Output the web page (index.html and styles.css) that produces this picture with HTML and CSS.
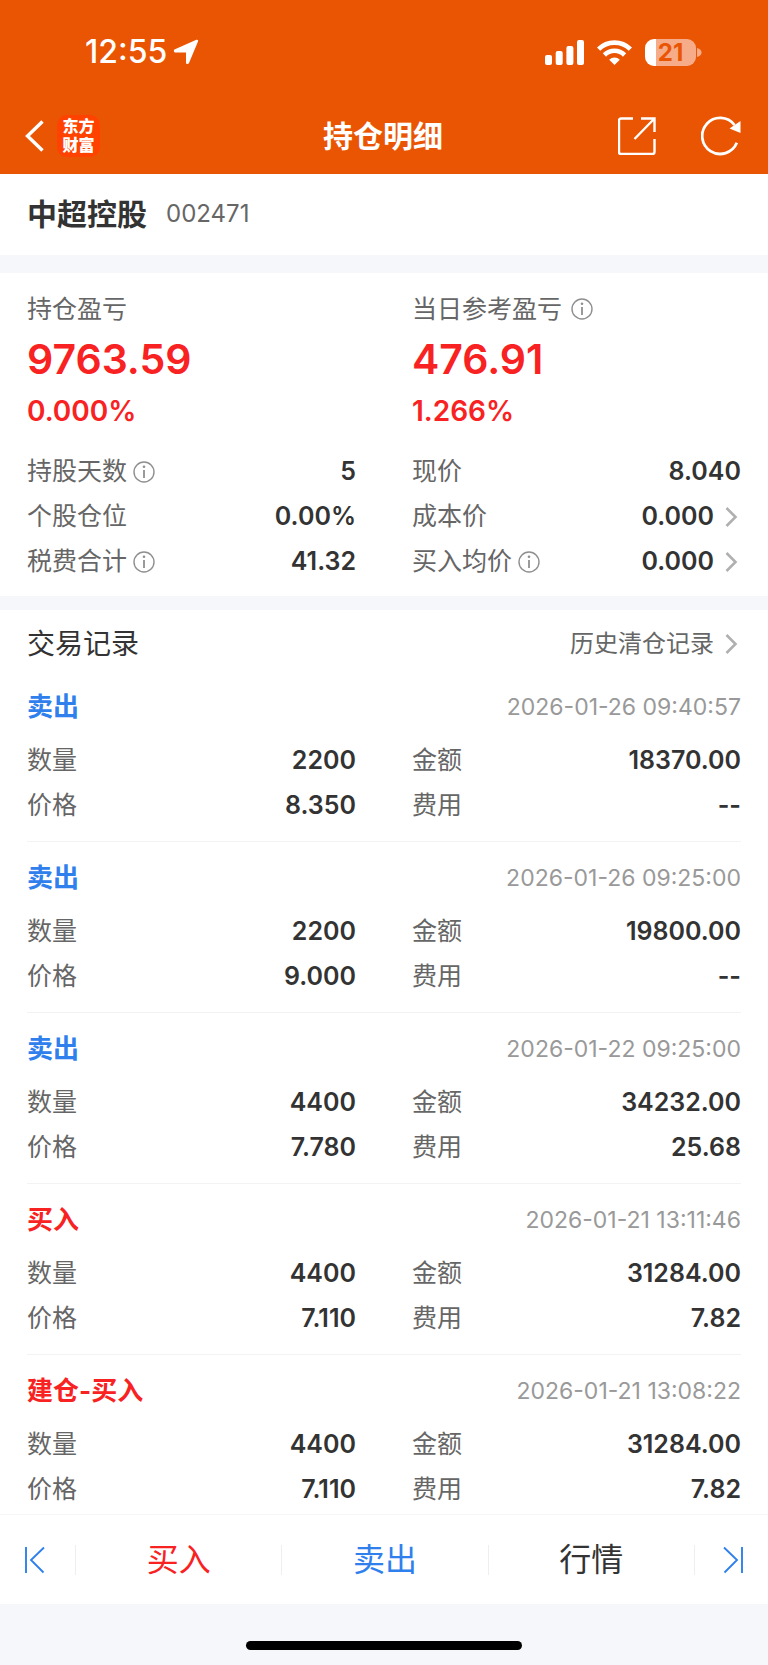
FILE: index.html
```html
<!DOCTYPE html>
<html lang="zh-CN">
<head>
<meta charset="utf-8">
<meta name="viewport" content="width=device-width, initial-scale=1">
<title>持仓明细</title>
<link rel="stylesheet" href="styles.css">
</head>
<body>
<svg class="sprite" aria-hidden="true">
  <symbol id="info" viewBox="0 0 22 22"><circle cx="11" cy="11" r="10" fill="none" stroke="currentColor" stroke-width="1.4"/><path d="M11 9v8" stroke="currentColor" stroke-width="1.8"/><circle cx="11" cy="5.8" r="1.3" fill="currentColor"/></symbol>
  <symbol id="chevron" viewBox="0 0 27 24"><path d="M12.500 3L21.500 12l-9 9" fill="none" stroke="#b0b0b0" stroke-width="2.600"/></symbol>
</svg>

<header class="top">
  <div class="status">
    <div class="status-left">
      <span class="clock">12:55</span>
      <svg width="26" height="26" viewBox="0 0 26 26"><path d="M23.4.8c1.3-.5 2.1.4 1.6 1.7L16 24c-.7 1.700-3 1.400-3-.5V13.500H2.700C.6 13.500.2 11 2 10.200z" fill="#fff"/></svg>
    </div>
    <div class="status-right">
      <svg width="39" height="25" viewBox="0 0 39 25" fill="#fff"><rect y="15" width="7" height="10" rx="2"/><rect x="10.700" y="11" width="7" height="14" rx="2"/><rect x="21.400" y="6" width="7" height="19" rx="2"/><rect x="32" y="0" width="7" height="25" rx="2"/></svg>
      <svg width="35" height="25" viewBox="0 0 35 25" fill="none" stroke="#fff" stroke-width="4.600"><path d="M1.600 9.200a22.500 22.500 0 0 1 31.800 0"/><path d="M7.400 15a14.300 14.300 0 0 1 20.200 0"/><path d="M17.500 25l-5.300-5.300a7.500 7.500 0 0 1 10.600 0z" fill="#fff" stroke="none"/></svg>
      <div class="battery"><span class="battery-body">21</span><svg width="5" height="9" viewBox="0 0 5 9"><path d="M0 0c6 1 6 8 0 9z" fill="#f6ac88"/></svg></div>
    </div>
  </div>
  <nav class="nav">
    <div class="nav-side">
      <button class="icon-btn" aria-label="返回"><svg width="20" height="32" viewBox="0 0 20 32"><path d="M17.500 1.500L2.500 16l15 14.500" fill="none" stroke="#fff" stroke-width="3.400"/></svg></button>
      <span class="logo">东方<br>财富</span>
    </div>
    <h1 class="title">持仓明细</h1>
    <div class="nav-side nav-actions">
      <button class="icon-btn" aria-label="分享"><svg width="38" height="38" viewBox="0 0 38 38" fill="none" stroke="#fff" stroke-width="2.400"><path d="M15 1.500H3a2 2 0 0 0-2 2v31.500a2 2 0 0 0 2 2h31.500a2 2 0 0 0 2-2V22M23 1.500h13.500V15M36 2L16.500 22"/></svg></button>
      <button class="icon-btn" aria-label="刷新"><svg width="40" height="40" viewBox="0 0 40 40"><path d="M35.800 26.800A18 18 0 1 1 33.500 9" fill="none" stroke="#fff" stroke-width="2.800"/><path d="M39.500 5v12L28.500 12.500z" fill="#fff"/></svg></button>
    </div>
  </nav>
</header>

<main>
  <section class="stock">
    <h2 class="stock-name">中超控股</h2>
    <span class="stock-code">002471</span>
  </section>

  <section class="summary">
    <div class="cols">
      <div class="profit">
        <span class="label">持仓盈亏</span>
        <strong class="amount">9763.59</strong>
        <span class="rate">0.000%</span>
      </div>
      <div class="profit">
        <span class="label label-wide">当日参考盈亏<button class="icon-btn" aria-label="说明"><svg class="info"><use href="#info"/></svg></button></span>
        <strong class="amount">476.91</strong>
        <span class="rate">1.266%</span>
      </div>
    </div>
    <dl class="cols facts">
      <div class="row"><dt>持股天数<button class="icon-btn" aria-label="说明"><svg class="info"><use href="#info"/></svg></button></dt><dd>5</dd></div>
      <div class="row"><dt>现价</dt><dd>8.040</dd></div>
      <div class="row"><dt>个股仓位</dt><dd>0.00%</dd></div>
      <div class="row"><dt>成本价</dt><dd>0.000<svg class="chevron"><use href="#chevron"/></svg></dd></div>
      <div class="row"><dt>税费合计<button class="icon-btn" aria-label="说明"><svg class="info"><use href="#info"/></svg></button></dt><dd>41.32</dd></div>
      <div class="row"><dt>买入均价<button class="icon-btn" aria-label="说明"><svg class="info"><use href="#info"/></svg></button></dt><dd>0.000<svg class="chevron"><use href="#chevron"/></svg></dd></div>
    </dl>
  </section>

  <section class="records">
    <div class="records-head">
      <h2 class="records-title">交易记录</h2>
      <a class="history" href="#history">历史清仓记录<svg class="chevron"><use href="#chevron"/></svg></a>
    </div>
    <article class="record">
      <div class="record-head"><h3 class="side sell">卖出</h3><time>2026-01-26 09:40:57</time></div>
      <dl class="cols">
        <div class="row"><dt>数量</dt><dd>2200</dd></div><div class="row"><dt>金额</dt><dd>18370.00</dd></div>
        <div class="row"><dt>价格</dt><dd>8.350</dd></div><div class="row"><dt>费用</dt><dd>--</dd></div>
      </dl>
    </article>
    <article class="record">
      <div class="record-head"><h3 class="side sell">卖出</h3><time>2026-01-26 09:25:00</time></div>
      <dl class="cols">
        <div class="row"><dt>数量</dt><dd>2200</dd></div><div class="row"><dt>金额</dt><dd>19800.00</dd></div>
        <div class="row"><dt>价格</dt><dd>9.000</dd></div><div class="row"><dt>费用</dt><dd>--</dd></div>
      </dl>
    </article>
    <article class="record">
      <div class="record-head"><h3 class="side sell">卖出</h3><time>2026-01-22 09:25:00</time></div>
      <dl class="cols">
        <div class="row"><dt>数量</dt><dd>4400</dd></div><div class="row"><dt>金额</dt><dd>34232.00</dd></div>
        <div class="row"><dt>价格</dt><dd>7.780</dd></div><div class="row"><dt>费用</dt><dd>25.68</dd></div>
      </dl>
    </article>
    <article class="record">
      <div class="record-head"><h3 class="side buy">买入</h3><time>2026-01-21 13:11:46</time></div>
      <dl class="cols">
        <div class="row"><dt>数量</dt><dd>4400</dd></div><div class="row"><dt>金额</dt><dd>31284.00</dd></div>
        <div class="row"><dt>价格</dt><dd>7.110</dd></div><div class="row"><dt>费用</dt><dd>7.82</dd></div>
      </dl>
    </article>
    <article class="record">
      <div class="record-head"><h3 class="side buy">建仓-买入</h3><time>2026-01-21 13:08:22</time></div>
      <dl class="cols">
        <div class="row"><dt>数量</dt><dd>4400</dd></div><div class="row"><dt>金额</dt><dd>31284.00</dd></div>
        <div class="row"><dt>价格</dt><dd>7.110</dd></div><div class="row"><dt>费用</dt><dd>7.82</dd></div>
      </dl>
    </article>
  </section>
</main>

<footer>
  <div class="actions">
    <button class="action step" aria-label="上一个"><svg width="22" height="28" viewBox="0 0 22 28" fill="none" stroke="#2f80ed" stroke-width="1.900"><path d="M2 1v26M20 1.500L7 14l12.500 12.500"/></svg></button>
    <button class="action buy">买入</button>
    <button class="action sell">卖出</button>
    <button class="action">行情</button>
    <button class="action step" aria-label="下一个"><svg width="22" height="28" viewBox="0 0 22 28" fill="none" stroke="#2f80ed" stroke-width="1.900"><path d="M20 1v26M2 1.500L15 14L2.500 26.500"/></svg></button>
  </div>
  <div class="home"><div class="home-bar"></div></div>
</footer>
</body>
</html>
```

FILE: styles.css
```css
* { box-sizing: border-box; }
body, h1, h2, h3, dl, dd { margin: 0; }
body {
  background: #f6f7fa;
  color: #333;
  font-family: Inter, "Noto Sans CJK SC", sans-serif;
  font-size: 25px;
}
button { font: inherit; color: inherit; background: none; border: 0; padding: 0; }
svg { display: block; flex: none; }
.sprite { position: absolute; width: 0; height: 0; }
.icon-btn { display: flex; }
.buy { color: #f82222; }
.sell { color: #2f80ed; }

.top { background: #ea5504; color: #fff; }
.status {
  height: 104px;
  padding: 0 66px 0 85px;
  display: flex;
  align-items: center;
  justify-content: space-between;
}
.status-left { display: flex; align-items: center; gap: 6px; }
.clock { font-size: 32px; font-weight: 500; line-height: 36px; }
.status-right { display: flex; align-items: center; gap: 13px; }
.battery { display: flex; align-items: center; gap: 1px; }
.battery-body {
  width: 51px;
  height: 27px;
  border-radius: 9px;
  background: linear-gradient(to right, #fff 11px, #f6ac88 11px);
  color: #ea5504;
  font-size: 24px;
  font-weight: 700;
  line-height: 27px;
  text-align: center;
}
.nav {
  height: 70px;
  padding: 0 27px 6px 25px;
  display: grid;
  grid-template-columns: 1fr auto 1fr;
  align-items: center;
}
.nav-side { display: flex; align-items: center; gap: 12px; }
.nav-actions { justify-content: flex-end; gap: 45px; }
.logo {
  width: 43px;
  height: 42px;
  padding-top: 1px;
  border-radius: 10px;
  background: #ff4200;
  font-family: "Noto Sans CJK SC", sans-serif;
  font-size: 16px;
  font-weight: 900;
  line-height: 19px;
  text-align: center;
}
.title { font-size: 30px; font-weight: 700; line-height: 40px; }

.stock {
  height: 81px;
  padding: 0 27px 2px;
  background: #fff;
  display: flex;
  align-items: center;
  gap: 19px;
}
.stock-name { font-size: 30px; font-weight: 700; line-height: 40px; }
.stock-code { color: #666; font-size: 24px; }

.summary { margin: 18px 0 14px; padding: 18px 27px 12px; background: #fff; }
.cols { display: grid; grid-template-columns: 1fr 1fr; column-gap: 56px; }
.profit { display: flex; flex-direction: column; }
.label { height: 36px; line-height: 36px; color: #666; display: flex; align-items: center; }
.label-wide { gap: 9px; }
.amount { font-size: 41px; font-weight: 600; line-height: 64px; color: #f82222; }
.rate { font-size: 28px; font-weight: 600; line-height: 40px; color: #f82222; }
.facts { margin-top: 18px; }
.row { height: 45px; display: flex; align-items: center; justify-content: space-between; }
dt { color: #666; display: flex; align-items: center; gap: 6px; line-height: 45px; }
dd { font-weight: 600; display: flex; align-items: center; line-height: 45px; }
.info { width: 22px; height: 22px; color: #8f8f8f; }
.chevron { width: 27px; height: 24px; }

.records { padding: 0 27px 2px; background: #fff; }
.records-head { height: 61px; padding-top: 6px; display: flex; align-items: center; justify-content: space-between; }
.records-title { font-size: 28px; font-weight: 400; line-height: 40px; }
.history { color: #666; font-size: 24px; text-decoration: none; display: flex; align-items: center; line-height: 40px; }
.record { padding: 18px 0 13px; border-bottom: 1px solid #f3f3f5; }
.record:last-child { padding-bottom: 0; border-bottom: 0; }
.record-head { height: 36px; margin-bottom: 13px; display: flex; align-items: center; justify-content: space-between; }
.side { font-size: 26px; font-weight: 700; line-height: 36px; }
time { color: #999; font-size: 23px; line-height: 36px; }

.actions {
  height: 90px;
  border-top: 1px solid #f6f6f8;
  background: #fff;
  display: grid;
  grid-template-columns: 75px 1fr 1fr 1fr 74px;
  align-items: center;
}
.action {
  height: 30px;
  display: flex;
  align-items: center;
  justify-content: center;
  font-size: 32px;
  line-height: 30px;
}
.action + .action { border-left: 1px solid #eee; }
.step { padding-right: 5px; }
.step:last-child { padding: 0 0 0 3px; }
.home { height: 61px; padding-top: 37px; }
.home-bar { width: 36%; height: 9px; margin: 0 auto; border-radius: 5px; background: #000; }
```
